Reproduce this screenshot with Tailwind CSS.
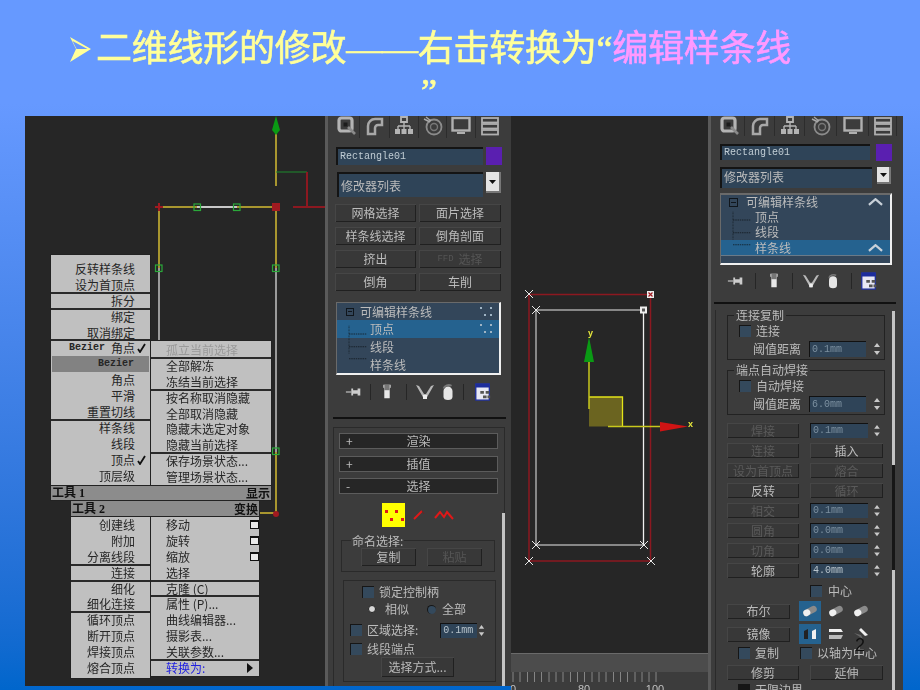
<!DOCTYPE html>
<html lang="zh-CN">
<head>
<meta charset="utf-8">
<title>二维线形的修改</title>
<script src="https://cdn.jsdelivr.net/npm/@tailwindcss/browser@4"></script>
</head>
<body class="m-0">
<!-- Shared icons -->
<svg class="hidden">
    <symbol id="i-create" viewBox="0 0 20 20"><rect x="2" y="2" width="13" height="13" rx="2.5" fill="none" stroke="#b4b4b4" stroke-width="3.200"/><rect x="6.500" y="6.500" width="4" height="4" fill="#1c1c1c"/><path d="M11 11l7 7" stroke="#8a8a8a" stroke-width="2.600"/></symbol>
    <symbol id="i-modify" viewBox="0 0 20 20"><path d="M3 18V10a7 7 0 0 1 7-7h7v6h-4a3 3 0 0 0-3 3v6z" fill="none" stroke="#a8a8a8" stroke-width="2.500"/></symbol>
    <symbol id="i-hier" viewBox="0 0 20 20"><path d="M7 1h6v5H7z" fill="none" stroke="#b4b4b4" stroke-width="1.800"/><path d="M10 6v4M4 10h12M4 10v3M10 10v3M16 10v3" stroke="#b4b4b4" stroke-width="1.400"/><path d="M1 13h5v5H1zM7.500 13h5v5h-5zM14 13h5v5h-5z" fill="#b4b4b4"/></symbol>
    <symbol id="i-motion" viewBox="0 0 20 20"><circle cx="11" cy="11" r="7.500" fill="none" stroke="#8c8c8c" stroke-width="1.800"/><circle cx="11" cy="11" r="3.500" fill="none" stroke="#777" stroke-width="1.400"/><path d="M1 3l6 3M3 1l5 4" stroke="#a8a8a8" stroke-width="1.400"/></symbol>
    <symbol id="i-display" viewBox="0 0 20 20"><rect x="1.500" y="2" width="17" height="12.500" fill="none" stroke="#b0b0b0" stroke-width="2.400"/><path d="M6 17h8" stroke="#b0b0b0" stroke-width="2"/></symbol>
    <symbol id="i-util" viewBox="0 0 20 20"><rect x="2" y="2" width="16" height="4.500" fill="none" stroke="#b0b0b0" stroke-width="1.800"/><rect x="2" y="8" width="16" height="4.500" fill="none" stroke="#b0b0b0" stroke-width="1.800"/><rect x="2" y="14" width="16" height="4.500" fill="none" stroke="#b0b0b0" stroke-width="1.800"/></symbol>
    <symbol id="i-pin" viewBox="0 0 20 20"><path d="M1 10h6" stroke="#bbb" stroke-width="1.400"/><path d="M7 6h2v2h5V6h3v8h-3v-2H9v2H7z" fill="#ccc"/></symbol>
    <symbol id="i-bar" viewBox="0 0 20 20"><path d="M6 2h8v3l-1 1v11H7V6L6 5z" fill="#e8e8e8"/><path d="M7 2h6v6H7z" fill="#777"/></symbol>
    <symbol id="i-fork" viewBox="0 0 20 20"><path d="M1 3l8 14h2l8-14-3 1-5 8h-2L4 4z" fill="#b8b8b8"/><path d="M8 13h4v4H8z" fill="#eee"/></symbol>
    <symbol id="i-bin" viewBox="0 0 20 20"><path d="M5 9a5 5 0 0 1 10 0v6a5 4 0 0 1-10 0z" fill="#e6e6e6"/><path d="M5 6a6 5 0 0 1 9-3" fill="none" stroke="#777" stroke-width="2"/></symbol>
    <symbol id="i-config" viewBox="0 0 20 20"><rect x="2" y="1" width="15" height="18" fill="#e8e8f4" stroke="#1c2c9c" stroke-width="1.400"/><rect x="2" y="1" width="15" height="4" fill="#1c2c9c"/><path d="M7 9h4v3H7zM13 9h4v3h-4zM10 14h4v3h-4zM15 14h3v3h-3z" fill="#555"/></symbol>
    <symbol id="i-spin" viewBox="0 0 10 16"><path d="M5 2l3 4H2zM5 14l3-4H2z" fill="#c8c8c8"/></symbol>
    <symbol id="i-dots" viewBox="0 0 14 12"><path d="M1 1h2v2H1zM11 1h2v2h-2zM5 8h2v2H5zM11 8h2v2h-2z" fill="#9fb4c4"/></symbol>
    <symbol id="i-chev" viewBox="0 0 16 8"><path d="M1 7l7-6 7 6" fill="none" stroke="#c8d0d8" stroke-width="2.400"/></symbol>
    <symbol id="i-tree1" viewBox="0 0 32 54"><path d="M4 8v37" stroke="#10161c" stroke-width="1" stroke-dasharray="1 1"/><path d="M4 19h24M4 36h24M4 52h24" stroke="#10161c" stroke-width="1" stroke-dasharray="2 1"/></symbol>
    <symbol id="i-pill" viewBox="0 0 20 14"><g transform="rotate(-28 10 7)"><rect x="1" y="3" width="18" height="8" rx="4" fill="#8a8a8a"/><rect x="1" y="3" width="9" height="8" rx="4" fill="#f0f0f0"/></g></symbol>
</svg>

<div class="relative w-[920px] h-[690px] overflow-hidden bg-linear-to-b from-[#6699ff] from-15% to-[#0066cc] [font-family:'Noto_Sans_CJK_SC','Noto_Sans',sans-serif]">

    <!-- Title -->
    <div class="w-[722px] ml-[68px] pt-[28px] text-[36px] leading-[43px] text-[#ffff99] blur-[0.3px] [-webkit-text-stroke:0.6px] [font-family:'Liberation_Serif','Noto_Sans_CJK_SC',serif]">
        <div class="flex items-center whitespace-nowrap">
            <svg class="w-[24px] h-[28px] shrink-0 mr-[4px] mt-[-2px]" viewBox="0 0 24 28"><path d="M2 2l21 12L2 27l6-13z" fill="#ffff99"/><path d="M4.500 6l15 8H8.500z" fill="#6699ff"/></svg>
            <span class="tracking-[-0.25px]">二维线形的修改——右击转换为“<span class="text-[#ff99ff]">编辑样条线</span></span>
        </div>
        <div class="text-center">”</div>
    </div>

    <!-- Left screenshot: viewport, quad menu and modify panel -->
    <div class="absolute left-[25px] top-[116px] w-[486px] h-[570px] flex bg-[#262626] overflow-hidden blur-[0.5px]">
        <div class="w-[300px] h-full shrink-0">
            <svg class="block" width="300" height="570" viewBox="25 116 300 570" fill="none">
                <path d="M276 130v56" stroke="#a8962f" stroke-width="2"/>
                <path d="M276 116l4 14h-8z" fill="#0a9a14"/>
                <path d="M272 130h8l-4 5z" fill="#0a9a14"/>
                <path d="M276 172h31" stroke="#1c8a2c" stroke-width="1"/>
                <path d="M307 172v35M293 207h32" stroke="#8c1820" stroke-width="2"/>
                <path d="M159 207v61M276 207v61M276 452v61M159 207h117M260 513h16" stroke="#a8962f" stroke-width="2"/>
                <path d="M159 268v72M276 268v184" stroke="#9a9a9a" stroke-width="2"/>
                <path d="M197 207h40" stroke="#c8c8c8" stroke-width="2"/>
                <path d="M159 203v8M155 207h8" stroke="#a01a20" stroke-width="2"/>
                <rect x="272" y="203" width="8" height="8" fill="#a01a20"/>
                <circle cx="276" cy="514" r="3" fill="#a01a20"/>
                <g stroke="#2aa83a" stroke-width="1.200"><rect x="194" y="204" width="6.500" height="6.500"/><rect x="233.500" y="204" width="6.500" height="6.500"/><rect x="155.500" y="265" width="6.500" height="6.500"/><rect x="272.500" y="265" width="6.500" height="6.500"/><rect x="272.500" y="448" width="6.500" height="6.500"/></g>
            </svg>
        </div>

        <!-- Modify panel -->
        <div class="relative w-[186px] h-full shrink-0 bg-[#3c3c3c] border-l-[3px] border-[#5a5a5a] text-[12px] leading-none text-[#bcbcbc]">
            <div class="flex h-[22px] pl-[6px]">
                <div class="w-[26px] flex justify-center border-r border-[#2c2c2c]"><svg class="w-[20px] h-[20px]"><use href="#i-create"/></svg></div>
                <div class="w-[30px] flex justify-center border-r border-[#2c2c2c]"><svg class="w-[20px] h-[20px]"><use href="#i-modify"/></svg></div>
                <div class="w-[29px] flex justify-center border-r border-[#2c2c2c]"><svg class="w-[20px] h-[20px]"><use href="#i-hier"/></svg></div>
                <div class="w-[28px] flex justify-center border-r border-[#2c2c2c]"><svg class="w-[20px] h-[20px]"><use href="#i-motion"/></svg></div>
                <div class="w-[29px] flex justify-center border-r border-[#2c2c2c]"><svg class="w-[22px] h-[20px]"><use href="#i-display"/></svg></div>
                <div class="w-[28px] flex justify-center"><svg class="w-[20px] h-[20px]"><use href="#i-util"/></svg></div>
            </div>
            <div class="flex gap-[3px] mt-[9px] ml-[8px]">
                <div class="w-[147px] h-[18px] flex items-center pl-[2px] bg-[#2f4458] border-t-2 border-l-2 border-[#141414] text-[10px] text-[#c0ccd4] [font-family:'Liberation_Mono',monospace]">Rectangle01</div>
                <div class="w-[16px] h-[18px] bg-[#5a1fb0]"></div>
            </div>
            <div class="flex gap-[3px] mt-[7px] ml-[9px]">
                <div class="w-[146px] h-[25px] flex items-center pl-[2px] bg-[#2f4458] border-t-2 border-l-2 border-[#141414]">修改器列表</div>
                <div class="w-[15px] h-[21px] flex items-center justify-center bg-[#e4e4e4] border-r-2 border-b-2 border-[#777]"><svg class="w-[7px] h-[4px]" viewBox="0 0 7 4"><path d="M0 0h7L3.500 4z" fill="#111"/></svg></div>
            </div>
            <div class="grid grid-cols-[81px_82px] gap-x-[3px] gap-y-[5px] mt-[7px] ml-[7px]">
                <div class="h-[18px] flex items-center justify-center bg-[#383838] shadow-[inset_1px_1px_0_#464646,inset_-1px_-1px_0_#202020]">网格选择</div>
                <div class="h-[18px] flex items-center justify-center bg-[#383838] shadow-[inset_1px_1px_0_#464646,inset_-1px_-1px_0_#202020]">面片选择</div>
                <div class="h-[18px] flex items-center justify-center bg-[#383838] shadow-[inset_1px_1px_0_#464646,inset_-1px_-1px_0_#202020]">样条线选择</div>
                <div class="h-[18px] flex items-center justify-center bg-[#383838] shadow-[inset_1px_1px_0_#464646,inset_-1px_-1px_0_#202020]">倒角剖面</div>
                <div class="h-[18px] flex items-center justify-center bg-[#383838] shadow-[inset_1px_1px_0_#464646,inset_-1px_-1px_0_#202020]">挤出</div>
                <div class="h-[18px] flex items-center justify-center gap-[5px] bg-[#383838] text-[#555] shadow-[inset_1px_1px_0_#464646,inset_-1px_-1px_0_#202020]"><span class="text-[9px] [font-family:'Liberation_Mono',monospace]">FFD</span>选择</div>
                <div class="h-[18px] flex items-center justify-center bg-[#383838] shadow-[inset_1px_1px_0_#464646,inset_-1px_-1px_0_#202020]">倒角</div>
                <div class="h-[18px] flex items-center justify-center bg-[#383838] shadow-[inset_1px_1px_0_#464646,inset_-1px_-1px_0_#202020]">车削</div>
            </div>

            <!-- Modifier stack -->
            <div class="relative w-[165px] h-[73px] mt-[11px] ml-[8px] bg-[#33465a] border-t border-l border-[#6a6a6a] border-r-2 border-b-2 border-r-[#f0f0f0] border-b-[#f0f0f0]">
                <div class="flex items-center h-[17px] pl-[9px]">
                    <span class="w-[8px] h-[8px] flex items-center justify-center border border-[#10161c] mr-[6px]"><span class="w-[4px] h-px bg-[#10161c]"></span></span>可编辑样条线<svg class="w-[14px] h-[12px] ml-auto mr-[6px]"><use href="#i-dots"/></svg>
                </div>
                <div class="flex items-center h-[18px] pl-[33px] bg-[#25628f]">顶点<svg class="w-[14px] h-[12px] ml-auto mr-[6px]"><use href="#i-dots"/></svg></div>
                <div class="flex items-center h-[18px] pl-[33px]">线段</div>
                <div class="flex items-center h-[17px] pl-[33px]">样条线</div>
                <svg class="absolute left-[9px] top-[8px] w-[24px] h-[58px]"><use href="#i-tree1"/></svg>
            </div>

            <div class="flex items-center h-[34px] ml-[17px]">
                <svg class="w-[18px] h-[18px] mr-[7px]"><use href="#i-pin"/></svg>
                <span class="w-px h-[16px] bg-[#262626] mr-[7px]"></span>
                <svg class="w-[18px] h-[18px] mr-[10px]"><use href="#i-bar"/></svg>
                <span class="w-px h-[16px] bg-[#262626] mr-[8px]"></span>
                <svg class="w-[20px] h-[20px] mr-[4px]"><use href="#i-fork"/></svg>
                <svg class="w-[18px] h-[18px] mr-[6px]"><use href="#i-bin"/></svg>
                <span class="w-px h-[16px] bg-[#262626] mr-[10px]"></span>
                <svg class="w-[18px] h-[18px]"><use href="#i-config"/></svg>
            </div>
            <div class="h-[2px] mt-[8px] ml-[5px] w-[173px] bg-[#111]"></div>

            <!-- Rollouts -->
            <div class="h-[260px] mt-[8px] ml-[5px] w-[172px] border-l border-t border-r border-[#2a2a2a] px-[5px] pt-[5px]">
                <div class="flex items-center h-[16px] mb-[7px] w-[159px] bg-[#262626] border border-[#5c5c5c]"><span class="w-[16px] pl-[6px]">+</span><span class="flex-1 text-center pr-[16px]">渲染</span></div>
                <div class="flex items-center h-[16px] mb-[6px] w-[159px] bg-[#262626] border border-[#5c5c5c]"><span class="w-[16px] pl-[6px]">+</span><span class="flex-1 text-center pr-[16px]">插值</span></div>
                <div class="flex items-center h-[16px] w-[159px] bg-[#262626] border border-[#5c5c5c]"><span class="w-[16px] pl-[6px]">-</span><span class="flex-1 text-center pr-[16px]">选择</span></div>

                <div class="flex items-center h-[24px] mt-[9px] ml-[43px]">
                    <svg class="w-[23px] h-[24px] mr-[8px]" viewBox="0 0 23 24"><rect width="23" height="24" fill="#ffff00"/><path d="M3 7h3v3H3zM13 7h3v3h-3zM8 15h3v3H8zM19 15h3v3h-3z" fill="#e01818"/></svg>
                    <svg class="w-[12px] h-[10px] mr-[9px]" viewBox="0 0 12 10"><path d="M1 9l8-8" stroke="#e01818" stroke-width="2"/><path d="M9 1l2 3" stroke="#702020" stroke-width="1"/></svg>
                    <svg class="w-[20px] h-[10px]" viewBox="0 0 20 10"><path d="M1 8l5-6 4 5 3-5 6 7" fill="none" stroke="#e01818" stroke-width="2"/></svg>
                </div>

                <div class="relative h-[32px] mt-[13px] w-[154px] ml-[2px] border border-[#2a2a2a] flex gap-[11px] pl-[19px] pt-[7px]">
                    <span class="absolute -top-[6px] left-[9px] px-[1px] bg-[#3c3c3c]">命名选择:</span>
                    <div class="w-[55px] h-[18px] flex items-center justify-center bg-[#383838] shadow-[inset_1px_1px_0_#464646,inset_-1px_-1px_0_#202020]">复制</div>
                    <div class="w-[55px] h-[18px] flex items-center justify-center bg-[#383838] text-[#555] shadow-[inset_1px_1px_0_#464646,inset_-1px_-1px_0_#202020]">粘贴</div>
                </div>

                <div class="h-[102px] mt-[8px] w-[153px] ml-[4px] border border-[#2a2a2a]">
                    <div class="flex items-center h-[12px] mt-[5px] ml-[18px]"><span class="w-[12px] h-[12px] mr-[5px] bg-[#34495c] border-t border-l border-[#161616]"></span>锁定控制柄</div>
                    <div class="flex items-center h-[12px] mt-[5px] ml-[24px]">
                        <span class="w-[8px] h-[8px] mr-[9px] rounded-full bg-[#d8d8d8] border border-[#222]"></span>相似
                        <span class="w-[9px] h-[9px] ml-[18px] mr-[6px] rounded-full bg-[#34495c] border-t border-l border-[#161616]"></span>全部
                    </div>
                    <div class="flex items-center h-[14px] mt-[8px] ml-[6px]">
                        <span class="w-[12px] h-[12px] mr-[5px] bg-[#34495c] border-t border-l border-[#161616]"></span>区域选择:
                        <span class="w-[37px] h-[15px] ml-[22px] flex items-center pl-[2px] bg-[#2f4458] border-t border-l border-[#111] text-[10px] text-[#b8c4cc] [font-family:'Liberation_Mono',monospace]">0.1mm</span>
                        <svg class="w-[9px] h-[15px]"><use href="#i-spin"/></svg>
                    </div>
                    <div class="flex items-center h-[12px] mt-[6px] ml-[6px]"><span class="w-[12px] h-[12px] mr-[5px] bg-[#34495c] border-t border-l border-[#161616]"></span>线段端点</div>
                    <div class="w-[73px] h-[20px] mt-[2px] ml-[37px] flex items-center justify-center bg-[#383838] shadow-[inset_1px_1px_0_#464646,inset_-1px_-1px_0_#202020]">选择方式...</div>
                </div>
            </div>
            <div class="absolute left-[174px] top-[397px] w-[3px] h-[173px] bg-[#c4c4c4]"></div>
        </div>
    </div>

    <!-- Quad menu -->
    <div class="absolute left-[50px] top-[254px] w-[222px] text-[12px] leading-none text-[#262626] blur-[0.4px]">
        <div class="flex items-end">
            <div class="w-[101px] h-[231px] pt-[6px] pr-[15px] bg-[#c0c0c0] border border-[#222] border-b-0">
                <div class="h-[15.9px] flex items-center justify-end">反转样条线</div>
                <div class="h-[15.9px] flex items-center justify-end">设为首顶点</div>
                <div class="h-0 border-t-2 border-[#2a2a2a] -my-px -mr-[15px]"></div>
                <div class="h-[15.9px] flex items-center justify-end">拆分</div>
                <div class="h-0 border-t-2 border-[#2a2a2a] -my-px -mr-[15px]"></div>
                <div class="h-[15.9px] flex items-center justify-end">绑定</div>
                <div class="h-[15.9px] flex items-center justify-end">取消绑定</div>
                <div class="h-0 border-t-2 border-[#2a2a2a] -my-px -mr-[15px]"></div>
                <div class="h-[15.9px] -mr-[12px] flex items-center justify-end"><span class="text-[10px] [font-family:'Liberation_Mono',monospace] font-bold mr-[6px]">Bezier</span>角点<svg class="w-[10px] h-[10px] ml-[2px]" viewBox="0 0 10 10"><path d="M1 6l2 3 5-8" fill="none" stroke="#111" stroke-width="1.800"/></svg></div>
                <div class="h-[15.9px] pr-[15px] -mr-[14px] ml-[1px] flex items-center justify-end bg-[#828282] text-[10px] font-bold [font-family:'Liberation_Mono',monospace]">Bezier</div>
                <div class="h-[15.9px] flex items-center justify-end">角点</div>
                <div class="h-[15.9px] flex items-center justify-end">平滑</div>
                <div class="h-[15.9px] flex items-center justify-end">重置切线</div>
                <div class="h-0 border-t-2 border-[#2a2a2a] -my-px -mr-[15px]"></div>
                <div class="h-[15.9px] flex items-center justify-end">样条线</div>
                <div class="h-[15.9px] flex items-center justify-end">线段</div>
                <div class="h-[15.9px] -mr-[12px] flex items-center justify-end">顶点<svg class="w-[10px] h-[10px] ml-[2px]" viewBox="0 0 10 10"><path d="M1 6l2 3 5-8" fill="none" stroke="#111" stroke-width="1.800"/></svg></div>
                <div class="h-[15.9px] flex items-center justify-end">顶层级</div>
            </div>
            <div class="w-[121px] h-[145px] pt-[1px] bg-[#c0c0c0] border border-l-0 border-b-0 border-[#222] pl-[15px]">
                <div class="h-[15.9px] flex items-center text-[#9a9a9a]">孤立当前选择</div>
                <div class="h-0 border-t-2 border-[#2a2a2a] -my-px -ml-[15px]"></div>
                <div class="h-[15.9px] flex items-center">全部解冻</div>
                <div class="h-[15.9px] flex items-center">冻结当前选择</div>
                <div class="h-0 border-t-2 border-[#2a2a2a] -my-px -ml-[15px]"></div>
                <div class="h-[15.9px] flex items-center">按名称取消隐藏</div>
                <div class="h-[15.9px] flex items-center">全部取消隐藏</div>
                <div class="h-[15.9px] flex items-center">隐藏未选定对象</div>
                <div class="h-[15.9px] flex items-center">隐藏当前选择</div>
                <div class="h-0 border-t-2 border-[#2a2a2a] -my-px -ml-[15px]"></div>
                <div class="h-[15.9px] flex items-center">保存场景状态...</div>
                <div class="h-[15.9px] flex items-center">管理场景状态...</div>
            </div>
        </div>
        <div class="flex justify-between items-center h-[16px] px-[1px] bg-[#8c8c8c] border border-[#222] text-[#111] font-bold"><span class="[font-family:'Liberation_Serif','Noto_Sans_CJK_SC',serif]">工具 1</span><span>显示</span></div>
        <div class="ml-[20px] w-[190px]">
            <div class="flex justify-between items-center h-[16px] px-[1px] bg-[#8c8c8c] border border-[#222] border-t-0 text-[#111] font-bold"><span class="[font-family:'Liberation_Serif','Noto_Sans_CJK_SC',serif]">工具 2</span><span>变换</span></div>
            <div class="flex items-start">
                <div class="w-[81px] h-[162px] pr-[15px] bg-[#c0c0c0] border border-t-0 border-[#222]">
                    <div class="h-[15.9px] flex items-center justify-end">创建线</div>
                    <div class="h-[15.9px] flex items-center justify-end">附加</div>
                    <div class="h-[15.9px] flex items-center justify-end">分离线段</div>
                    <div class="h-0 border-t-2 border-[#2a2a2a] -my-px -mr-[15px]"></div>
                    <div class="h-[15.9px] flex items-center justify-end">连接</div>
                    <div class="h-0 border-t-2 border-[#2a2a2a] -my-px -mr-[15px]"></div>
                    <div class="h-[15.9px] flex items-center justify-end">细化</div>
                    <div class="h-[15.9px] flex items-center justify-end">细化连接</div>
                    <div class="h-0 border-t-2 border-[#2a2a2a] -my-px -mr-[15px]"></div>
                    <div class="h-[15.9px] flex items-center justify-end">循环顶点</div>
                    <div class="h-[15.9px] flex items-center justify-end">断开顶点</div>
                    <div class="h-[15.9px] flex items-center justify-end">焊接顶点</div>
                    <div class="h-[15.9px] flex items-center justify-end">熔合顶点</div>
                </div>
                <div class="w-[109px] h-[160px] bg-[#c0c0c0] border border-l-0 border-t-0 border-[#222] pl-[15px]">
                    <div class="h-[15.9px] flex items-center justify-between">移动<span class="w-[9px] h-[9px] bg-[#e8e8e8] border border-t-2 border-[#111]"></span></div>
                    <div class="h-[15.9px] flex items-center justify-between">旋转<span class="w-[9px] h-[9px] bg-[#e8e8e8] border border-t-2 border-[#111]"></span></div>
                    <div class="h-[15.9px] flex items-center justify-between">缩放<span class="w-[9px] h-[9px] bg-[#e8e8e8] border border-t-2 border-[#111]"></span></div>
                    <div class="h-[15.9px] flex items-center">选择</div>
                    <div class="h-0 border-t-2 border-[#2a2a2a] -my-px -ml-[15px]"></div>
                    <div class="h-[15.9px] flex items-center">克隆 (C)</div>
                    <div class="h-0 border-t-2 border-[#2a2a2a] -my-px -ml-[15px]"></div>
                    <div class="h-[15.9px] flex items-center">属性 (P)...</div>
                    <div class="h-[15.9px] flex items-center">曲线编辑器...</div>
                    <div class="h-[15.9px] flex items-center">摄影表...</div>
                    <div class="h-[15.9px] flex items-center">关联参数...</div>
                    <div class="h-0 border-t-2 border-[#2a2a2a] -my-px -ml-[15px]"></div>
                    <div class="h-[15.9px] flex items-center justify-between pr-[6px] text-[#2020e0]">转换为:<svg class="w-[6px] h-[10px]" viewBox="0 0 6 10"><path d="M0 0l6 5-6 5z" fill="#111"/></svg></div>
                </div>
            </div>
        </div>
    </div>

    <!-- Right screenshot: viewport and modify panel -->
    <div class="absolute left-[511px] top-[116px] w-[392px] h-[574px] flex bg-[#262626] overflow-hidden blur-[0.5px]">
        <div class="w-[197px] h-full shrink-0 flex flex-col">
            <svg class="block" width="197" height="537" viewBox="511 116 197 537" fill="none">
                <rect x="529" y="294.500" width="121.500" height="266.500" stroke="#8c1820" stroke-width="1.500"/>
                <path d="M536 310h107.500M536 310v235M536 545h107.500" stroke="#a8a8a8" stroke-width="1.500"/>
                <path d="M643.500 310v235" stroke="#f0f0f0" stroke-width="1.300"/>
                <path d="M525 290l8 8M533 290l-8 8M525 557l8 8M533 557l-8 8M647 557l8 8M655 557l-8 8M532 306l8 8M540 306l-8 8M532 541l8 8M540 541l-8 8M640 541l8 8M648 541l-8 8" stroke="#e8e8e8" stroke-width="1"/>
                <rect x="647" y="291" width="7" height="7" fill="#eee"/><path d="M648.500 292.500l4 4M652.500 292.500l-4 4" stroke="#a01a20" stroke-width="1.200"/>
                <rect x="640" y="306.500" width="7" height="7" fill="#eee"/><rect x="642" y="308.500" width="3" height="3" fill="#555"/>
                <path d="M589 397h33.500v29.500H589z" fill="#6b6420"/>
                <path d="M589 397h33.500v29.500" stroke="#e4e418" stroke-width="1.300"/>
                <path d="M589 360v49M608 426.500h52" stroke="#c8c81c" stroke-width="1.500"/>
                <path d="M589 337l5 25h-10z" fill="#0a9a14"/>
                <path d="M660 422l28 4.500-28 5z" fill="#d01414"/>
                <text x="588" y="336" fill="#e8e83c" font-size="9" font-weight="700" font-family="Liberation Sans">y</text>
                <text x="688" y="427" fill="#e8e83c" font-size="9" font-weight="700" font-family="Liberation Sans">x</text>
            </svg>
            <div class="h-[19px] bg-[#4c4c4c] border-t border-[#6a6a6a]"></div>
            <svg class="block" width="197" height="18" viewBox="511 672 197 18" fill="none">
                <rect x="511" y="672" width="197" height="18" fill="#3c3c3c"/>
                <path d="M513 672v10M520 672v10M527.500 672v10M534.500 672v10M541.500 672v10M549 672v10M556 672v10M563 672v10M570.500 672v10M577.500 672v10M584.500 672v10M592 672v10M599 672v10M606 672v10M613.500 672v10M620.500 672v10M627.500 672v10M635 672v10M642 672v10M649 672v10M656 672v10" stroke="#858585" stroke-width="1"/>
                <text x="513" y="693" text-anchor="middle" fill="#c0c0c0" font-size="11" font-family="Liberation Sans">0</text>
                <text x="584" y="693" text-anchor="middle" fill="#c0c0c0" font-size="11" font-family="Liberation Sans">80</text>
                <text x="655" y="693" text-anchor="middle" fill="#c0c0c0" font-size="11" font-family="Liberation Sans">100</text>
            </svg>
        </div>

        <!-- Modify panel, spline selection -->
        <div class="relative w-[195px] h-full shrink-0 bg-[#3c3c3c] border-l-[3px] border-[#5a5a5a] text-[12px] leading-none text-[#bcbcbc]">
            <div class="flex h-[20px] pl-[4px]">
                <div class="w-[30px] flex justify-center border-r border-[#2c2c2c]"><svg class="w-[20px] h-[20px]"><use href="#i-create"/></svg></div>
                <div class="w-[30px] flex justify-center border-r border-[#2c2c2c]"><svg class="w-[20px] h-[20px]"><use href="#i-modify"/></svg></div>
                <div class="w-[30px] flex justify-center border-r border-[#2c2c2c]"><svg class="w-[20px] h-[20px]"><use href="#i-hier"/></svg></div>
                <div class="w-[32px] flex justify-center border-r border-[#2c2c2c]"><svg class="w-[20px] h-[20px]"><use href="#i-motion"/></svg></div>
                <div class="w-[32px] flex justify-center border-r border-[#2c2c2c]"><svg class="w-[22px] h-[20px]"><use href="#i-display"/></svg></div>
                <div class="w-[28px] flex justify-center border-r border-[#2c2c2c]"><svg class="w-[20px] h-[20px]"><use href="#i-util"/></svg></div>
            </div>
            <div class="flex gap-[6px] h-[16px] mt-[8px] ml-[9px]">
                <div class="w-[150px] h-[16px] flex items-center pl-[2px] bg-[#2f4458] border-t-2 border-l-2 border-[#141414] text-[10px] text-[#c0ccd4] [font-family:'Liberation_Mono',monospace]">Rectangle01</div>
                <div class="w-[16px] h-[17px] bg-[#5a1fb0]"></div>
            </div>
            <div class="flex gap-[5px] mt-[7px] ml-[9px]">
                <div class="w-[152px] h-[21px] flex items-center pl-[2px] pb-[4px] bg-[#2f4458] border-t-2 border-l-2 border-[#141414]">修改器列表</div>
                <div class="w-[14px] h-[17px] flex items-center justify-center bg-[#e4e4e4] border-r-2 border-b-2 border-[#777]"><svg class="w-[7px] h-[4px]" viewBox="0 0 7 4"><path d="M0 0h7L3.500 4z" fill="#111"/></svg></div>
            </div>
            <div class="relative w-[172px] h-[72px] mt-[5px] ml-[9px] bg-[#33465a] border-t-2 border-l border-[#6a6a6a] border-r-2 border-b-2 border-r-[#f0f0f0] border-b-[#f0f0f0]">
                <div class="flex items-center h-[14px] pl-[8px]">
                    <span class="w-[9px] h-[9px] flex items-center justify-center border border-[#10161c] mr-[8px]"><span class="w-[5px] h-px bg-[#10161c]"></span></span>可编辑样条线<svg class="w-[15px] h-[8px] ml-auto mr-[7px]"><use href="#i-chev"/></svg>
                </div>
                <div class="flex items-center h-[15px] pl-[34px]">顶点</div>
                <div class="flex items-center h-[16px] pl-[34px]">线段</div>
                <div class="flex items-center h-[16px] pl-[34px] bg-[#25628f] border-b border-[#6a7a88]">样条线<svg class="w-[15px] h-[8px] ml-auto mr-[7px]"><use href="#i-chev"/></svg></div>
                <svg class="absolute left-[9px] top-[6px] w-[24px] h-[50px]"><use href="#i-tree1"/></svg>
            </div>
            <div class="flex items-center h-[32px] ml-[16px]">
                <svg class="w-[18px] h-[18px] mr-[10px]"><use href="#i-pin"/></svg>
                <span class="w-px h-[16px] bg-[#262626] mr-[9px]"></span>
                <svg class="w-[18px] h-[18px] mr-[9px]"><use href="#i-bar"/></svg>
                <span class="w-px h-[16px] bg-[#262626] mr-[8px]"></span>
                <svg class="w-[20px] h-[18px] mr-[4px]"><use href="#i-fork"/></svg>
                <svg class="w-[16px] h-[18px] mr-[10px]"><use href="#i-bin"/></svg>
                <span class="w-px h-[16px] bg-[#262626] mr-[8px]"></span>
                <svg class="w-[18px] h-[18px]"><use href="#i-config"/></svg>
            </div>
            <div class="h-[2px] mt-[5px] ml-[3px] w-[182px] bg-[#111]"></div>

            <!-- Spline rollout -->
            <div class="h-[386px] mt-[6px] ml-[4px] w-[174px] border-l border-[#2a2a2a] pt-[5px] pl-[11px] overflow-hidden">
                <div class="relative h-[45px] w-[158px] border border-[#222]">
                    <span class="absolute -top-[7px] left-[6px] px-[2px] bg-[#3c3c3c]">连接复制</span>
                    <div class="flex items-center h-[12px] mt-[9px] ml-[11px]"><span class="w-[12px] h-[12px] mr-[5px] bg-[#34495c] border-t border-l border-[#161616]"></span>连接</div>
                    <div class="flex items-center h-[16px] mt-[4px] ml-[25px]">
                        <span class="w-[56px]">阈值距离</span>
                        <span class="w-[57px] h-[16px] flex items-center pl-[2px] bg-[#2f4458] border-t border-l border-[#111] text-[10px] text-[#7c90a0] [font-family:'Liberation_Mono',monospace]">0.1mm</span>
                        <svg class="w-[10px] h-[16px] ml-[6px]"><use href="#i-spin"/></svg>
                    </div>
                </div>
                <div class="relative h-[45px] w-[158px] mt-[10px] border border-[#222]">
                    <span class="absolute -top-[7px] left-[6px] px-[2px] bg-[#3c3c3c]">端点自动焊接</span>
                    <div class="flex items-center h-[12px] mt-[9px] ml-[11px]"><span class="w-[12px] h-[12px] mr-[5px] bg-[#34495c] border-t border-l border-[#161616]"></span>自动焊接</div>
                    <div class="flex items-center h-[16px] mt-[4px] ml-[25px]">
                        <span class="w-[56px]">阈值距离</span>
                        <span class="w-[57px] h-[16px] flex items-center pl-[2px] bg-[#2f4458] border-t border-l border-[#111] text-[10px] text-[#7c90a0] [font-family:'Liberation_Mono',monospace]">6.0mm</span>
                        <svg class="w-[10px] h-[16px] ml-[6px]"><use href="#i-spin"/></svg>
                    </div>
                </div>

                <div class="grid grid-cols-[72px_73px] gap-x-[11px] gap-y-[5px] mt-[8px]">
                    <div class="h-[15px] flex items-center justify-center bg-[#383838] text-[#5a5a5a] shadow-[inset_1px_1px_0_#464646,inset_-1px_-1px_0_#202020]">焊接</div>
                    <div class="flex items-center h-[15px]"><span class="w-[58px] h-[15px] flex items-center pl-[2px] bg-[#2f4458] border-t border-l border-[#111] text-[10px] text-[#7c90a0] [font-family:'Liberation_Mono',monospace]">0.1mm</span><svg class="w-[10px] h-[15px] ml-[4px]"><use href="#i-spin"/></svg></div>
                    <div class="h-[15px] flex items-center justify-center bg-[#383838] text-[#5a5a5a] shadow-[inset_1px_1px_0_#464646,inset_-1px_-1px_0_#202020]">连接</div>
                    <div class="h-[15px] flex items-center justify-center bg-[#383838] shadow-[inset_1px_1px_0_#464646,inset_-1px_-1px_0_#202020]">插入</div>
                    <div class="h-[15px] flex items-center justify-center bg-[#383838] text-[#5a5a5a] shadow-[inset_1px_1px_0_#464646,inset_-1px_-1px_0_#202020]">设为首顶点</div>
                    <div class="h-[15px] flex items-center justify-center bg-[#383838] text-[#5a5a5a] shadow-[inset_1px_1px_0_#464646,inset_-1px_-1px_0_#202020]">熔合</div>
                    <div class="h-[15px] flex items-center justify-center bg-[#383838] shadow-[inset_1px_1px_0_#464646,inset_-1px_-1px_0_#202020]">反转</div>
                    <div class="h-[15px] flex items-center justify-center bg-[#383838] text-[#5a5a5a] shadow-[inset_1px_1px_0_#464646,inset_-1px_-1px_0_#202020]">循环</div>
                    <div class="h-[15px] flex items-center justify-center bg-[#383838] text-[#5a5a5a] shadow-[inset_1px_1px_0_#464646,inset_-1px_-1px_0_#202020]">相交</div>
                    <div class="flex items-center h-[15px]"><span class="w-[58px] h-[15px] flex items-center pl-[2px] bg-[#2f4458] border-t border-l border-[#111] text-[10px] text-[#7c90a0] [font-family:'Liberation_Mono',monospace]">0.1mm</span><svg class="w-[10px] h-[15px] ml-[4px]"><use href="#i-spin"/></svg></div>
                    <div class="h-[15px] flex items-center justify-center bg-[#383838] text-[#5a5a5a] shadow-[inset_1px_1px_0_#464646,inset_-1px_-1px_0_#202020]">圆角</div>
                    <div class="flex items-center h-[15px]"><span class="w-[58px] h-[15px] flex items-center pl-[2px] bg-[#2f4458] border-t border-l border-[#111] text-[10px] text-[#7c90a0] [font-family:'Liberation_Mono',monospace]">0.0mm</span><svg class="w-[10px] h-[15px] ml-[4px]"><use href="#i-spin"/></svg></div>
                    <div class="h-[15px] flex items-center justify-center bg-[#383838] text-[#5a5a5a] shadow-[inset_1px_1px_0_#464646,inset_-1px_-1px_0_#202020]">切角</div>
                    <div class="flex items-center h-[15px]"><span class="w-[58px] h-[15px] flex items-center pl-[2px] bg-[#2f4458] border-t border-l border-[#111] text-[10px] text-[#7c90a0] [font-family:'Liberation_Mono',monospace]">0.0mm</span><svg class="w-[10px] h-[15px] ml-[4px]"><use href="#i-spin"/></svg></div>
                    <div class="h-[15px] flex items-center justify-center bg-[#383838] shadow-[inset_1px_1px_0_#464646,inset_-1px_-1px_0_#202020]">轮廓</div>
                    <div class="flex items-center h-[15px]"><span class="w-[58px] h-[15px] flex items-center pl-[2px] bg-[#2f4458] border-t border-l border-[#111] text-[10px] text-[#b8c4cc] [font-family:'Liberation_Mono',monospace]">4.0mm</span><svg class="w-[10px] h-[15px] ml-[4px]"><use href="#i-spin"/></svg></div>
                </div>

                <div class="flex items-center h-[13px] mt-[6px] ml-[83px]"><span class="w-[12px] h-[12px] mr-[6px] bg-[#34495c] border-t border-l border-[#161616]"></span>中心</div>
                <div class="flex items-center h-[20px] mt-[4px]">
                    <div class="w-[63px] h-[15px] flex items-center justify-center bg-[#383838] shadow-[inset_1px_1px_0_#464646,inset_-1px_-1px_0_#202020]">布尔</div>
                    <div class="w-[22px] h-[20px] ml-[9px] flex items-center justify-center bg-[#25628f]"><svg class="w-[16px] h-[12px]"><use href="#i-pill"/></svg></div>
                    <svg class="w-[16px] h-[12px] ml-[7px]"><use href="#i-pill"/></svg>
                    <svg class="w-[16px] h-[12px] ml-[9px]"><use href="#i-pill"/></svg>
                </div>
                <div class="flex items-center h-[20px] mt-[3px]">
                    <div class="w-[63px] h-[15px] flex items-center justify-center bg-[#383838] shadow-[inset_1px_1px_0_#464646,inset_-1px_-1px_0_#202020]">镜像</div>
                    <div class="w-[22px] h-[20px] ml-[9px] flex items-center justify-center bg-[#25628f]"><svg class="w-[16px] h-[12px]" viewBox="0 0 16 12"><path d="M2 3l4-2v10H2z" fill="#222"/><path d="M14 1v10h-4V3z" fill="#f0f0f0"/></svg></div>
                    <svg class="w-[16px] h-[12px] ml-[7px]" viewBox="0 0 16 12"><path d="M1 1h12l2 3H1z" fill="#f0f0f0"/><path d="M1 7h14l-2 4H1z" fill="#bbb"/></svg>
                    <svg class="w-[16px] h-[14px] ml-[9px]" viewBox="0 0 16 14"><path d="M8 1l7 7-3 1-6-6z" fill="#f0f0f0"/><path d="M1 6l7 2 2 4z" fill="#666"/></svg>
                </div>
                <div class="flex items-center h-[12px] mt-[3px]">
                    <span class="w-[12px] h-[12px] ml-[11px] mr-[5px] bg-[#34495c] border-t border-l border-[#161616]"></span><span class="w-[45px]">复制</span>
                    <span class="w-[12px] h-[12px] mr-[5px] bg-[#34495c] border-t border-l border-[#161616]"></span>以轴为中心
                </div>
                <div class="grid grid-cols-[72px_73px] gap-x-[11px] mt-[6px]">
                    <div class="h-[15px] flex items-center justify-center bg-[#383838] shadow-[inset_1px_1px_0_#464646,inset_-1px_-1px_0_#202020]">修剪</div>
                    <div class="h-[15px] flex items-center justify-center bg-[#383838] shadow-[inset_1px_1px_0_#464646,inset_-1px_-1px_0_#202020]">延伸</div>
                </div>
                <div class="flex items-center h-[12px] mt-[4px]"><span class="w-[12px] h-[12px] ml-[11px] mr-[5px] bg-[#161616]"></span>无限边界</div>
            </div>

            <!-- Scrollbar, over the rollout -->
            <div class="absolute left-[181px] top-[195px] w-[3px] h-[154px] bg-[#c4c4c4]"></div>
            <div class="absolute left-[181px] top-[349px] w-[3px] h-[105px] bg-[#161616]"></div>
            <div class="absolute left-[181px] top-[454px] w-[3px] h-[120px] bg-[#c4c4c4]"></div>
            <span class="absolute left-[144px] top-[520px] text-[18px] text-[#111] [font-family:'Liberation_Sans',sans-serif]">2</span>
        </div>
    </div>
</div>
</body>
</html>
